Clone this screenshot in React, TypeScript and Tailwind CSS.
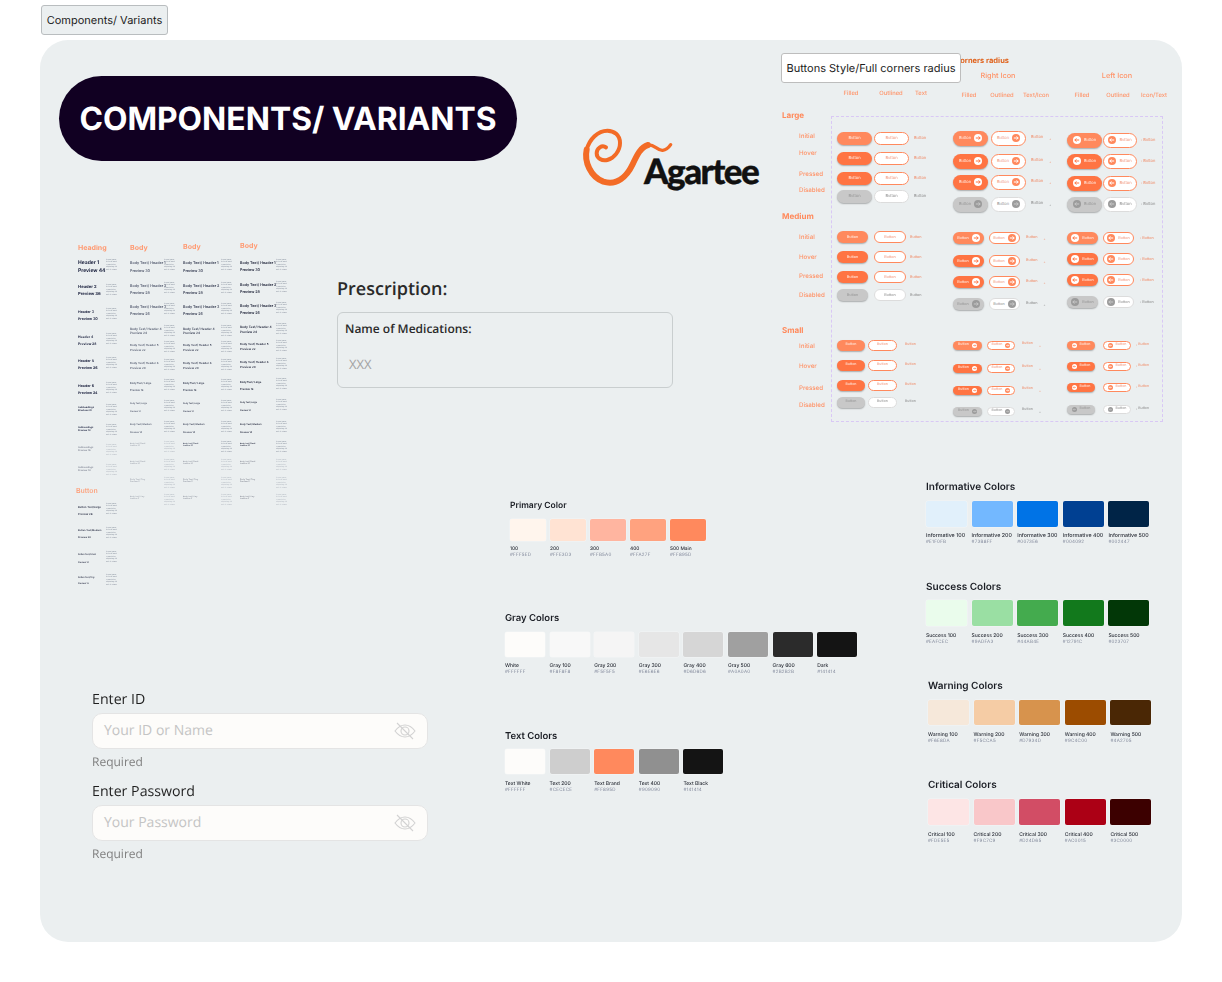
import React from "react";

const inter = "font-['Inter',sans-serif]";
const open = "font-['Open_Sans',sans-serif]";

type Sw = { name: string; hex: string; color: string };
function s(name: string, hex: string, color = hex): Sw {
  return { name, hex, color };
}

function rowsFrom(ys: number[], last: number) {
  return ys.map((y, i) => `${i < ys.length - 1 ? ys[i + 1] - y : last}px`).join(" ");
}

function Palette(props: { title: string; pos: string; titleCls: string; gap: string; size: string; width: string; nameCls: string; items: Sw[] }) {
  return (
    <div className={`absolute ${props.pos} ${inter} flex flex-col blur-[0.25px]`}>
      <div className={`translate-y-[1px] font-semibold text-[#1a1d24] whitespace-nowrap ${props.titleCls}`}>{props.title}</div>
      <div className={`flex ${props.gap}`}>
        {props.items.map((i) => (
          <div key={i.name} className={`flex flex-col ${props.width}`}>
            <div className={`${props.size} rounded-[2px] shadow-[0_0_0_0.5px_rgba(255,255,255,0.4)]`} style={{ backgroundColor: i.color }} />
            <div className={`translate-y-[1px] whitespace-nowrap font-medium text-[#2b2f38] ${props.nameCls}`}>{i.name}</div>
            <div className="translate-y-[1px] whitespace-nowrap text-[4.5px] leading-[7px] tracking-[0.25px] text-[#7f8699]">{i.hex}</div>
          </div>
        ))}
      </div>
    </div>
  );
}

const ARROW = "M-2.2 0H2.2M0.6 -1.6L2.2 0L0.6 1.6";
const ARROW_L = "M2.2 0H-2.2M-0.6 -1.6L-2.2 0L-0.6 1.6";

function Circle({ d, bg, fg, left }: { d: number; bg: string; fg: string; left?: boolean }) {
  return (
    <svg width={d} height={d} viewBox="-4 -4 8 8" className="shrink-0">
      <circle r="4" fill={bg} />
      <path d={left ? ARROW_L : ARROW} stroke={fg} strokeWidth="1" fill="none" />
    </svg>
  );
}

function Btn(p: { w: number; h: number; filled: boolean; st: number; icon?: "left" | "right"; fs: number }) {
  const disabled = p.st === 3;
  const orange = p.st === 0 ? "#FF895D" : "#FF7443";
  const d = p.h > 13 ? 8 : Math.max(p.h - 4, 5);
  const icon = p.icon ? (
    <Circle
      d={d}
      left={p.icon === "left"}
      bg={disabled ? "#9b9b9b" : p.filled ? "#FFFFFF" : "#FF895D"}
      fg={disabled ? "#c8c8c8" : p.filled ? "#FF7443" : "#FFFFFF"}
    />
  ) : null;
  const cls = p.filled
    ? disabled
      ? "bg-[#C8C8C8] text-[#969696] shadow-[0_1px_1.5px_rgba(0,0,0,0.28)]"
      : "text-[#fff1ea] shadow-[0_1px_1.5px_rgba(0,0,0,0.28)]"
    : disabled
      ? "bg-white text-[#8c8c8c] border border-[#dcdcdc]"
      : "bg-white text-[#f0937a] border border-[#FF895D]";
  return (
    <div
      style={{ width: p.w, height: p.h, fontSize: p.fs, backgroundColor: p.filled && !disabled ? orange : undefined }}
      className={`rounded-full flex items-center justify-center gap-[3px] whitespace-nowrap ${cls}`}
    >
      {p.icon === "left" && icon}
      <span className="leading-none">Button</span>
      {p.icon === "right" && icon}
    </div>
  );
}

function TextBtn({ st, h, fs, icon }: { st: number; h: number; fs: number; icon?: "left" | "right" }) {
  const disabled = st === 3;
  return (
    <div style={{ height: h, fontSize: fs }} className={`flex items-center gap-[1px] whitespace-nowrap ${disabled ? "text-[#8a8a8a]" : "text-[#f08a66]"} ${icon === "right" ? "-translate-y-[1px]" : ""}`}>
      {icon === "left" && <span className="-ml-[3px] text-[3px]">›</span>}
      <span className="leading-none">Button</span>
      {icon === "right" && <span className="ml-[5px] mt-[5px] text-[3px]">+</span>}
    </div>
  );
}

type Block = { icon?: "left" | "right"; h: number; fs: number; x: number[]; w: number[]; ys: number[] };
const BLOCKS: Block[] = [
  { h: 13, fs: 4, x: [837, 874, 914], w: [35, 35], ys: [138, 158, 178, 196] },
  { h: 12, fs: 3.8, x: [837, 874, 910], w: [31, 32], ys: [237, 257, 277, 295] },
  { h: 11, fs: 3.6, x: [837, 868, 905], w: [28, 29], ys: [345, 365, 385, 402] },
  { icon: "right", h: 15, fs: 4, x: [953, 991, 1031], w: [35, 35], ys: [138, 161, 182, 204] },
  { icon: "right", h: 12, fs: 3.8, x: [953, 989, 1026], w: [31, 31], ys: [238, 261, 282, 304] },
  { icon: "right", h: 9, fs: 3.6, x: [953, 987, 1022], w: [29, 28], ys: [345, 368, 390, 411] },
  { icon: "left", h: 15, fs: 4, x: [1067, 1103, 1144], w: [35, 34], ys: [140, 161, 183, 204] },
  { icon: "left", h: 12, fs: 3.8, x: [1067, 1103, 1143], w: [31, 31], ys: [238, 259, 280, 302] },
  { icon: "left", h: 9, fs: 3.6, x: [1067, 1103, 1139], w: [28, 28], ys: [345, 366, 387, 409] },
];

function ButtonBlock({ b }: { b: Block }) {
  return (
    <div
      className="absolute grid items-start"
      style={{
        left: b.x[0],
        top: b.ys[0] - b.h / 2,
        gridTemplateColumns: `${b.x[1] - b.x[0]}px ${b.x[2] - b.x[1]}px auto`,
        gridTemplateRows: rowsFrom(b.ys, b.h),
      }}
    >
      {b.ys.map((_, st) => (
        <React.Fragment key={st}>
          <Btn w={b.w[0]} h={b.h} fs={b.fs} filled st={st} icon={b.icon} />
          <Btn w={b.w[1]} h={b.h} fs={b.fs} filled={false} st={st} icon={b.icon} />
          <TextBtn st={st} h={b.h} fs={b.fs} icon={b.icon} />
        </React.Fragment>
      ))}
    </div>
  );
}

const head = "text-center text-[5.8px] leading-[8px] font-medium text-[#ff9368] whitespace-nowrap";
const iconTitle = "text-center text-[7.3px] leading-[10px] font-medium text-[#ff9368] whitespace-nowrap";

const SIDE: [string, number, boolean][] = [
  ["Large", 115, true], ["Initial", 136, false], ["Hover", 153, false], ["Pressed", 174, false], ["Disabled", 190, false],
  ["Medium", 216, true], ["Initial", 237, false], ["Hover", 257, false], ["Pressed", 276, false], ["Disabled", 295, false],
  ["Small", 330, true], ["Initial", 346, false], ["Hover", 366, false], ["Pressed", 388, false], ["Disabled", 405, false],
];

function SideLabels() {
  return (
    <div className="absolute left-[782px] top-[111px] grid items-start" style={{ gridTemplateRows: rowsFrom(SIDE.map((r) => r[1]), 8) }}>
      {SIDE.map(([t, , big], i) => (
        <div key={i} className={big ? "text-[8px] leading-[8px] font-bold text-[#ff8a5c]" : "translate-y-[1px] pl-[17px] text-[6.2px] leading-[8px] font-medium text-[#ff9368]"}>{t}</div>
      ))}
    </div>
  );
}

const P = "Lorem ipsum dolor sit amet consectetur adipiscing elit sed do eiusm";

type TRow = [number, number, string, string, number];
const COL1: TRow[] = [
  [263, 271, "Header 1", "Preview 44", 5],
  [288, 295, "Header 2", "Preview 36", 4.2],
  [312, 319, "Header 3", "Preview 30", 3.6],
  [337, 344, "Header 4", "Preview 28", 3.4],
  [361, 368, "Header 5", "Preview 26", 3.6],
  [386, 393, "Header 6", "Preview 24", 3.6],
  [408, 411, "Subheadings", "Preview 20", 2.5],
  [428, 431, "Subheadings", "Preview 18", 2.4],
  [448, 451, "Subheadings", "Preview 16", 2.4],
  [468, 471, "Subheadings", "Preview 14", 2.4],
];
const COL1B: TRow[] = [
  [507, 514, "Button Text/Large", "Preview 24", 2.7],
  [531, 538, "Button Text/Medium", "Preview 20", 2.4],
  [555, 563, "Button Text/Small", "Preview 16", 2.1],
  [578, 584, "Button Text/Tiny", "Preview 12", 2.1],
];
const LABELS: [string, string, number][] = [
  ["Body Text/ Header 1", "Preview 30", 3.7],
  ["Body Text/ Header 2", "Preview 28", 3.7],
  ["Body Text/ Header 3", "Preview 26", 3.7],
  ["Body Text/ Header 4", "Preview 24", 3.2],
  ["Body Text/ Header 5", "Preview 22", 2.9],
  ["Body Text/ Header 6", "Preview 20", 2.9],
  ["Body Text/ Large", "Preview 18", 2.6],
  ["Body Text/ Large", "Preview 16", 2.1],
  ["Body Text/ Medium", "Preview 14", 2.3],
  ["Body Text/ Small", "Preview 12", 1.9],
  ["Body Text/ Small", "Preview 10", 1.9],
  ["Body Text/ Tiny", "Preview 8", 2],
  ["Body Text/ Tiny", "Preview 6", 1.9],
];
const C2: [number, number][] = [[263, 271], [286, 293], [307, 314], [329, 333], [345, 350], [363, 368], [383, 390], [404, 412], [425, 433], [445, 447], [463, 465], [481, 483], [498, 500]];
const C4: [number, number][] = [[263, 270], [285, 292], [306, 313], [327, 332], [344, 349], [362, 367], [382, 389], [403, 411], [425, 433], [445, 447], [463, 465], [481, 483], [498, 500]];

function body(c: [number, number][]): TRow[] {
  return c.map((y, i) => [y[0], y[1], LABELS[i][0], LABELS[i][1], LABELS[i][2]]);
}

function TypeCol({ x, px, rows, bold, tone, fadeFrom }: { x: number; px: number; rows: TRow[]; bold: boolean; tone: string; fadeFrom: number }) {
  const w = bold ? "font-bold" : "font-semibold";
  return (
    <div
      className="absolute grid items-start"
      style={{
        left: x,
        top: rows[0][0] - 2,
        gridTemplateColumns: `${px - x}px 12px`,
        gridTemplateRows: rowsFrom(rows.map((r) => r[0]), 12),
      }}
    >
      {rows.map((r, i) => {
        const gap = r[1] - r[0];
        const lead = Math.min(4, gap);
        return (
          <React.Fragment key={i}>
            <div className={`flex flex-col whitespace-nowrap ${w} ${tone} ${i >= fadeFrom ? "opacity-50" : ""}`} style={{ fontSize: r[4], lineHeight: `${lead}px` }}>
              <div style={{ height: gap }}>{r[2]}</div>
              <div>{r[3]}</div>
            </div>
            <div className={`-mt-[2px] text-[1.7px] leading-[2.4px] text-[#7c8494] ${i >= fadeFrom ? "opacity-60" : ""}`}>{P}</div>
          </React.Fragment>
        );
      })}
    </div>
  );
}

function Typography() {
  const h = "absolute text-[7px] leading-[10px] font-bold text-[#ff9a72]";
  return (
    <div className={`absolute inset-0 pointer-events-none ${inter} blur-[0.3px]`}>
      <div className={`${h} left-[78px] top-[243px]`}>Heading</div>
      <div className={`${h} left-[130px] top-[243px]`}>Body</div>
      <div className={`${h} left-[183px] top-[242px]`}>Body</div>
      <div className={`${h} left-[240px] top-[241px]`}>Body</div>
      <div className={`${h} left-[76px] top-[486px] font-medium`}>Button</div>
      <TypeCol x={78} px={106} rows={COL1} bold tone="text-[#1e2440]" fadeFrom={8} />
      <TypeCol x={78} px={106} rows={COL1B} bold={false} tone="text-[#2a2f45]" fadeFrom={99} />
      <TypeCol x={130} px={164} rows={body(C2)} bold={false} tone="text-[#555c70]" fadeFrom={9} />
      <TypeCol x={183} px={221} rows={body(C2)} bold={false} tone="text-[#3a4056]" fadeFrom={10} />
      <TypeCol x={240} px={276} rows={body(C4)} bold={false} tone="text-[#20253a]" fadeFrom={10} />
    </div>
  );
}

function EyeOff() {
  return (
    <svg width="22" height="18" viewBox="0 0 22 18" fill="none" stroke="#d2d2d2" strokeWidth="1.1" className="shrink-0">
      <path d="M1 9C4 5 7 3 11 3C15 3 18 5 21 9C18 13 15 15 11 15C7 15 4 13 1 9Z" />
      <circle cx="11" cy="9" r="4" />
      <path d="M3 1L19 17" />
    </svg>
  );
}

function Field({ label, placeholder, pos }: { label: string; placeholder: string; pos: string }) {
  return (
    <div className={`absolute ${pos} w-[336px] flex flex-col ${open}`}>
      <div className="translate-y-[1px] text-[14.2px] leading-[20px] text-[#1f1f1f]">{label}</div>
      <div className="mt-[4px] h-[36px] rounded-[10px] bg-[#FDFCFA] border border-[#e4e4e4] pl-[11px] pr-[11px] flex items-center justify-between">
        <span className="text-[14px] leading-[18px] text-[#c4c4c4]">{placeholder}</span>
        <EyeOff />
      </div>
      <div className="mt-[3px] text-[12px] leading-[20px] text-[#7f7f7f]">Required</div>
    </div>
  );
}

function Logo() {
  return (
    <div className="absolute left-[570px] top-[115px] w-[200px] h-[80px]">
      <svg width="200" height="80" viewBox="0 0 600 240" fill="none" stroke="#F36B26" strokeLinecap="round" strokeLinejoin="round" className="absolute inset-0">
        <path d="M108 97C96 88 80 100 80 115C80 130 96 139 112 135C132 130 150 108 150 84C150 60 132 47 112 47C84 47 58 72 50 104" strokeWidth="12" />
        <path d="M50 104C42 140 62 186 100 200C140 212 170 186 188 148C200 122 212 96 234 90" strokeWidth="18" />
        <path d="M234 90C252 86 262 108 278 106C288 105 296 98 302 89" strokeWidth="10" />
      </svg>
      <div className="absolute left-[74px] top-[34px] font-['Lato',sans-serif] font-black text-[35px] leading-[44px] tracking-[-1.5px] text-[#111111] [-webkit-text-stroke:0.4px_#111111]">Agartee</div>
    </div>
  );
}

export default function App() {
  return (
    <div className="relative w-[1222px] h-[982px] bg-white overflow-hidden pt-[5px] pl-[40px] [text-rendering:geometricPrecision]">
      <div className={`ml-[1px] w-[127px] h-[30px] flex items-center justify-center rounded-[3px] bg-[#ebeff0] border border-[#b9bdbf] text-[11px] text-[#1c1c1c] ${inter}`}>
        Components/ Variants
      </div>
      <div className="mt-[5px] w-[1142px] h-[902px] rounded-[28px] bg-[#EBEFF0]" />

      <div className="absolute left-[59px] top-[76px] w-[458px] h-[85px] rounded-full bg-[#110022] flex items-center justify-center">
        <span className={`${inter} font-bold text-[31.8px] text-white whitespace-nowrap`}>COMPONENTS/ VARIANTS</span>
      </div>

      <Logo />
      <Typography />

      <div className={`absolute left-[337px] top-[276px] w-[336px] flex flex-col ${open}`}>
        <div className="translate-y-[1px] text-[18px] leading-[25px] font-semibold text-[#2a2a2a]">Prescription:</div>
        <div className="mt-[11px] h-[76px] rounded-[6px] border border-[#c9cecf] px-[7px] pt-[7px]">
          <div className="text-[12px] leading-[18px] font-semibold text-[#2a2a2a]">Name of Medications:</div>
          <div className="mt-[17px] ml-[4px] text-[13px] leading-[18px] text-[#a3a3a3]">XXX</div>
        </div>
      </div>

      <div className={`absolute inset-0 pointer-events-none ${inter} blur-[0.3px]`}>
        <div className="absolute right-[213px] top-[56px] text-[7.5px] leading-[10px] font-bold text-[#e0641f] whitespace-nowrap">Buttons Style/Full corners radius</div>
        <div className="absolute left-[831px] top-[116px] w-[332px] h-[306px] border border-dashed border-[#d9c8f5]" />

        <div className="absolute left-[831px] top-[90px] grid grid-cols-[40px_40px_20px]">
          <div className={head}>Filled</div>
          <div className={head}>Outlined</div>
          <div className={head}>Text</div>
        </div>
        <div className="absolute left-[950px] top-[71px] w-[106px] flex flex-col gap-[11px]">
          <div className={`${iconTitle} pr-[10px]`}>Right Icon</div>
          <div className="grid grid-cols-[38px_28px_40px]">
            <div className={head}>Filled</div>
            <div className={head}>Outlined</div>
            <div className={head}>Text/Icon</div>
          </div>
        </div>
        <div className="absolute left-[1063px] top-[71px] w-[110px] flex flex-col gap-[11px]">
          <div className={`${iconTitle} pr-[2px]`}>Left Icon</div>
          <div className="grid grid-cols-[38px_34px_38px]">
            <div className={head}>Filled</div>
            <div className={head}>Outlined</div>
            <div className={head}>Icon/Text</div>
          </div>
        </div>

        <SideLabels />
        {BLOCKS.map((b, i) => (
          <ButtonBlock key={i} b={b} />
        ))}
      </div>
      <div className={`absolute left-[781px] top-[53px] w-[180px] h-[30px] flex items-center justify-center rounded-[3px] bg-white border border-[#bdbdbd] text-[11px] text-[#1c1c1c] whitespace-nowrap ${inter}`}>
        Buttons Style/Full corners radius
      </div>

      <Palette title="Primary Color" pos="left-[510px] top-[499px]" titleCls="text-[8.5px] leading-[12px] mb-[8px]" gap="gap-[4px]" size="h-[22px] w-[36px]" width="w-[36px]"
        nameCls="mt-[4px] text-[4.8px] leading-[6px]"
        items={[s("100", "#FFF5ED"), s("200", "#FFE3D3"), s("300", "#FFB5A0"), s("400", "#FFA27F"), s("500 Main", "#FF895D")]} />
      <Palette title="Gray Colors" pos="left-[505px] top-[611px]" titleCls="text-[9.5px] leading-[13px] mb-[8px]" gap="gap-[4.6px]" size="h-[25px] w-[40px]" width="w-[40px]"
        nameCls="mt-[5px] text-[5px] leading-[6px]"
        items={[s("White", "#FFFFFF", "#FDFCFA"), s("Gray 100", "#F8F8F8"), s("Gray 200", "#F5F5F5"), s("Gray 300", "#E6E6E6"), s("Gray 400", "#D6D6D6"), s("Gray 500", "#A0A0A0"), s("Gray 600", "#2B2B2B"), s("Dark", "#141414")]} />
      <Palette title="Text Colors" pos="left-[505px] top-[729px]" titleCls="text-[9.5px] leading-[13px] mb-[7px]" gap="gap-[4.6px]" size="h-[25px] w-[40px]" width="w-[40px]"
        nameCls="mt-[6px] text-[5px] leading-[6px]"
        items={[s("Text White", "#FFFFFF", "#FDFCFA"), s("Text 200", "#CECECE"), s("Text Brand", "#FF895D"), s("Text 400", "#909090"), s("Text Black", "#141414")]} />
      <Palette title="Informative Colors" pos="left-[926px] top-[480px]" titleCls="text-[10px] leading-[13px] mb-[8px]" gap="gap-[4.6px]" size="h-[26px] w-[41px]" width="w-[41px]"
        nameCls="mt-[5px] text-[5.3px] leading-[6px]"
        items={[s("Informative 100", "#E1F0FB"), s("Informative 200", "#73B8FF"), s("Informative 300", "#0073E6"), s("Informative 400", "#004092"), s("Informative 500", "#002447")]} />
      <Palette title="Success Colors" pos="left-[926px] top-[580px]" titleCls="text-[10px] leading-[13px] mb-[7px]" gap="gap-[4.6px]" size="h-[26px] w-[41px]" width="w-[41px]"
        nameCls="mt-[6px] text-[5px] leading-[6px]"
        items={[s("Success 100", "#EAFCEC"), s("Success 200", "#9ADFA3"), s("Success 300", "#44AB4E"), s("Success 400", "#12791C"), s("Success 500", "#023707")]} />
      <Palette title="Warning Colors" pos="left-[928px] top-[679px]" titleCls="text-[10px] leading-[13px] mb-[8px]" gap="gap-[4.6px]" size="h-[25px] w-[41px]" width="w-[41px]"
        nameCls="mt-[6px] text-[5px] leading-[6px]"
        items={[s("Warning 100", "#F6E8DA"), s("Warning 200", "#F5CCA5"), s("Warning 300", "#D7934D"), s("Warning 400", "#9C4C00"), s("Warning 500", "#4A2705")]} />
      <Palette title="Critical Colors" pos="left-[928px] top-[778px]" titleCls="text-[10px] leading-[13px] mb-[8px]" gap="gap-[4.6px]" size="h-[26px] w-[41px]" width="w-[41px]"
        nameCls="mt-[6px] text-[5px] leading-[6px]"
        items={[s("Critical 100", "#FDE5E5"), s("Critical 200", "#F9C7C9"), s("Critical 300", "#D24D65"), s("Critical 400", "#AC0015"), s("Critical 500", "#3C0000")]} />

      <Field label="Enter ID" placeholder="Your ID or Name" pos="left-[92px] top-[689px]" />
      <Field label="Enter Password" placeholder="Your Password" pos="left-[92px] top-[781px]" />
    </div>
  );
}
